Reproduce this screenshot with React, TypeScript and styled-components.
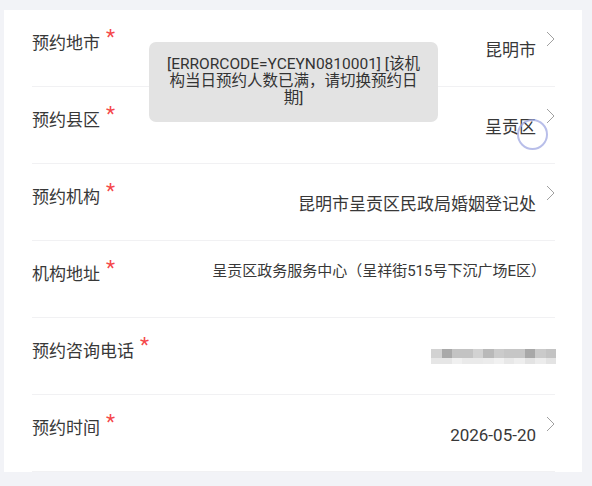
import React from 'react';
import styled, { createGlobalStyle } from 'styled-components';

const GlobalStyle = createGlobalStyle`
  html, body {
    margin: 0;
    padding: 0;
    background: #f2f3f7;
  }
  body {
    font-family: Roboto, "Noto Sans CJK SC", "Noto Sans", sans-serif;
    color: #383838;
  }
`;

const Screen = styled.div`
  position: relative;
  width: 592px;
  height: 486px;
  overflow: hidden;
  padding: 10px 10px 0 4px;
  box-sizing: border-box;
`;

const Card = styled.div`
  background: #fff;
  padding: 0 27px 0 28px;
`;

const Row = styled.div`
  display: flex;
  justify-content: space-between;
  align-items: flex-start;
  height: 76px;
  border-bottom: 1px solid #f1f1f3;
`;

const Label = styled.div`
  margin-top: 17px;
  font-size: 17px;
  line-height: 24px;
  color: #383838;
  white-space: nowrap;
`;

const Star = styled.span`
  display: inline-block;
  margin-left: 6px;
  color: #f5484a;
  font-size: 21px;
  line-height: 1;
  vertical-align: 5px;
`;

const ValueArea = styled.div`
  display: flex;
  align-items: flex-start;
`;

const Value = styled.div<{ $small?: boolean }>`
  margin-top: ${(p) => (p.$small ? '18px' : '28px')};
  margin-right: ${(p) => (p.$small ? '9px' : '0')};
  font-size: ${(p) => (p.$small ? '15px' : '17px')};
  line-height: 24px;
  color: #383838;
  white-space: nowrap;
`;

const Chevron = styled.svg`
  margin-top: 21px;
  margin-left: 10px;
  width: 9px;
  height: 16px;
  flex-shrink: 0;
`;

const Mosaic = styled.div`
  margin-top: 31px;
  margin-right: -1px;
  display: grid;
  grid-template-columns: repeat(12, 10.4px);
  grid-template-rows: 9px 6px;
`;

const Pixel = styled.div<{ $c: string }>`
  background: ${(p) => p.$c};
`;

const Toast = styled.div`
  position: absolute;
  left: 149px;
  top: 42px;
  width: 289px;
  height: 80px;
  box-sizing: border-box;
  padding: 14px 16px 0;
  background: #e3e3e3;
  border-radius: 7px;
  font-size: 15.5px;
  line-height: 17px;
  color: #333;
  text-align: center;
  word-break: break-all;
`;

const TouchRing = styled.div`
  position: absolute;
  left: 517px;
  top: 119px;
  width: 31px;
  height: 31px;
  box-sizing: border-box;
  border-radius: 50%;
  border: 2px solid rgba(160, 168, 225, 0.75);
`;

const Arrow = () => (
  <Chevron viewBox="0 0 9 16">
    <path d="M1 1 L8 8 L1 15" fill="none" stroke="#a0a0a0" strokeWidth="1" />
  </Chevron>
);

const topRow = ['#d2d2d2', '#a9a9a9', '#c3c3c3', '#c3c3c3', '#d2d2d2', '#b9b9b9', '#cbcbcb', '#c6c6c6', '#c6c6c6', '#a8a8a8', '#cacaca', '#c3c3c3'];
const bottomRow = ['#e6e6e6', '#e6e6e6', '#f0f0f0', '#eaeaea', '#eaeaea', '#ececec', '#f1f1f1', '#e8e8e8', '#eeeeee', '#e3e3e3', '#ececec', '#e3e3e3'];

const FieldLabel = ({ text }: { text: string }) => (
  <Label>
    {text}
    <Star>*</Star>
  </Label>
);

export default function App() {
  return (
    <>
      <GlobalStyle />
      <Screen>
        <Card>
          <Row>
            <FieldLabel text="预约地市" />
            <ValueArea>
              <Value>昆明市</Value>
              <Arrow />
            </ValueArea>
          </Row>
          <Row>
            <FieldLabel text="预约县区" />
            <ValueArea>
              <Value>呈贡区</Value>
              <Arrow />
            </ValueArea>
          </Row>
          <Row>
            <FieldLabel text="预约机构" />
            <ValueArea>
              <Value>昆明市呈贡区民政局婚姻登记处</Value>
              <Arrow />
            </ValueArea>
          </Row>
          <Row>
            <FieldLabel text="机构地址" />
            <ValueArea>
              <Value $small>呈贡区政务服务中心（呈祥街515号下沉广场E区）</Value>
            </ValueArea>
          </Row>
          <Row>
            <FieldLabel text="预约咨询电话" />
            <Mosaic>
              {topRow.concat(bottomRow).map((c, i) => (
                <Pixel key={i} $c={c} />
              ))}
            </Mosaic>
          </Row>
          <Row>
            <FieldLabel text="预约时间" />
            <ValueArea>
              <Value>2026-05-20</Value>
              <Arrow />
            </ValueArea>
          </Row>
        </Card>
        <Toast>[ERRORCODE=YCEYN0810001] [该机构当日预约人数已满，请切换预约日期]</Toast>
        <TouchRing />
      </Screen>
    </>
  );
}
